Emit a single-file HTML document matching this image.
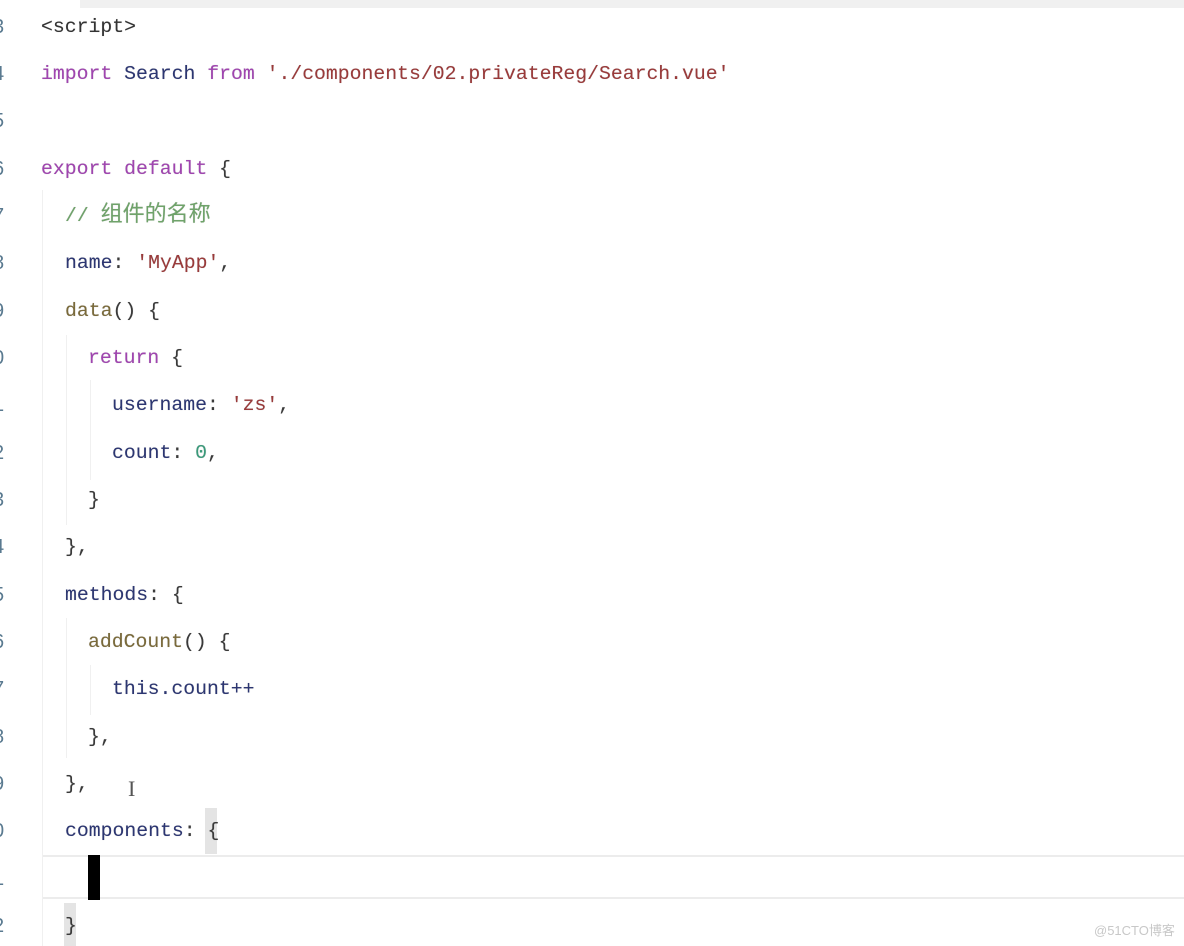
<!DOCTYPE html>
<html><head><meta charset="utf-8"><style>
html,body{margin:0;padding:0;width:1184px;height:946px;background:#fff;overflow:hidden;position:relative}
.l{position:absolute;left:41px;font-family:"Liberation Mono","Noto Sans CJK SC",monospace;font-size:19.8px;line-height:30px;color:#3a3a3a;white-space:pre;text-shadow:0 0 0.6px rgba(0,0,0,0.35)}
.n{position:absolute;left:-7px;font-family:"Liberation Sans",sans-serif;font-size:20px;line-height:30px;color:#5a7a90}
.k{color:#a044b0}.id{color:#2c3672}.s{color:#9a3a3a}.c{color:#6fa36a}.f{color:#7a6a3a}.num{color:#3a9a7a}.p{color:#333}
.cj{font-size:22px}
.g{position:absolute;width:1px;background:#f0f0f0}
</style></head><body>
<div style="position:absolute;left:80px;top:0;width:1104px;height:8px;background:#f0f0f0"></div>
<div style="position:absolute;left:42px;top:855px;width:1142px;height:44px;border-top:2px solid #ececec;border-bottom:2px solid #ececec;box-sizing:border-box"></div>
<div style="position:absolute;left:205px;top:808px;width:12px;height:46px;background:#e4e4e4"></div>
<div style="position:absolute;left:64px;top:903px;width:12px;height:43px;background:#e4e4e4"></div>
<div style="position:absolute;left:88px;top:855px;width:12px;height:45px;background:#000"></div>
<div class="g" style="left:42px;top:190px;height:756px"></div>
<div class="g" style="left:66px;top:335px;height:190px"></div>
<div class="g" style="left:66px;top:618px;height:140px"></div>
<div class="g" style="left:90px;top:380px;height:100px"></div>
<div class="g" style="left:90px;top:665px;height:50px"></div>

<div class="n" style="top:12px">3</div><div class="l" style="top:12px"><span class="p">&lt;script&gt;</span></div>
<div class="n" style="top:59px">4</div><div class="l" style="top:59px"><span class="k">import</span> <span class="id">Search</span> <span class="k">from</span> <span class="s">'./components/02.privateReg/Search.vue'</span></div>
<div class="n" style="top:106px">5</div>
<div class="n" style="top:154px">6</div><div class="l" style="top:154px"><span class="k">export</span> <span class="k">default</span> {</div>
<div class="n" style="top:201px">7</div><div class="l" style="top:201px;left:65px"><span class="c">// <span class="cj">组件的名称</span></span></div>
<div class="n" style="top:248px">8</div><div class="l" style="top:248px;left:65px"><span class="id">name</span>: <span class="s">'MyApp'</span>,</div>
<div class="n" style="top:296px">9</div><div class="l" style="top:296px;left:65px"><span class="f">data</span>() {</div>
<div class="n" style="top:343px">0</div><div class="l" style="top:343px;left:88px"><span class="k">return</span> {</div>
<div class="n" style="top:390px">1</div><div class="l" style="top:390px;left:112px"><span class="id">username</span>: <span class="s">'zs'</span>,</div>
<div class="n" style="top:438px">2</div><div class="l" style="top:438px;left:112px"><span class="id">count</span>: <span class="num">0</span>,</div>
<div class="n" style="top:485px">3</div><div class="l" style="top:485px;left:88px">}</div>
<div class="n" style="top:532px">4</div><div class="l" style="top:532px;left:65px">},</div>
<div class="n" style="top:580px">5</div><div class="l" style="top:580px;left:65px"><span class="id">methods</span>: {</div>
<div class="n" style="top:627px">6</div><div class="l" style="top:627px;left:88px"><span class="f">addCount</span>() {</div>
<div class="n" style="top:674px">7</div><div class="l" style="top:674px;left:112px"><span class="id">this</span><span class="id">.count++</span></div>
<div class="n" style="top:722px">8</div><div class="l" style="top:722px;left:88px">},</div>
<div class="n" style="top:769px">9</div><div class="l" style="top:769px;left:65px">},</div>
<div style="position:absolute;left:128px;top:776px;font-family:'Liberation Serif',serif;font-size:22px;color:#555">I</div>
<div class="n" style="top:816px">0</div><div class="l" style="top:816px;left:65px"><span class="id">components</span>: {</div>
<div class="n" style="top:864px">1</div>
<div class="n" style="top:911px">2</div><div class="l" style="top:911px;left:65px">}</div>
<div style="position:absolute;left:1094px;top:920px;font-family:'Liberation Sans','Noto Sans CJK SC',sans-serif;font-size:13px;color:#c8c8c8">@51CTO博客</div>
</body></html>
